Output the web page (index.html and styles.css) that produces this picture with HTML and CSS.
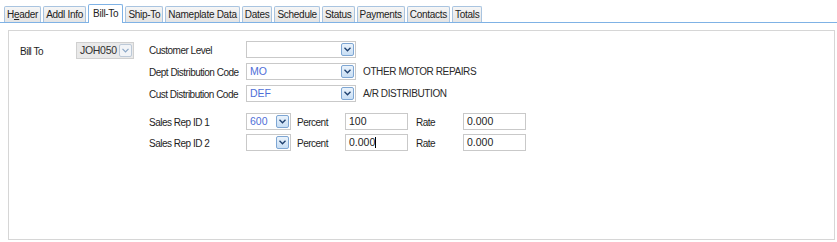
FILE: index.html
```html
<!DOCTYPE html>
<html lang="en">
<head>
    <meta charset="UTF-8">
    <title>Bill-To</title>
    <link rel="stylesheet" href="styles.css">
</head>
<body>

    <div class="tabs">
        <div class="tab">H<u>e</u>ader</div>
        <div class="tab">Addl Info</div>
        <div class="tab active">Bill-To</div>
        <div class="tab">Ship-To</div>
        <div class="tab">Nameplate Data</div>
        <div class="tab">Dates</div>
        <div class="tab">Schedule</div>
        <div class="tab">Status</div>
        <div class="tab">Payments</div>
        <div class="tab">Contacts</div>
        <div class="tab">Totals</div>
    </div>

    <div class="panel">
        <div class="billto">
            <span class="lbl">Bill To</span>
            <div class="combo disabled">
                <span class="val dark">JOH050</span>
                <span class="btn"><svg width="7" height="5" viewBox="0 0 7 5"><path d="M0.5 0.8 L3.5 3.8 L6.5 0.8" fill="none" stroke="#8aa6c6" stroke-width="1.2"/></svg></span>
            </div>
        </div>

        <div class="fields">
            <div class="row">
                <span class="lbl wide">Customer Level</span>
                <div class="combo long">
                    <span class="val"></span>
                    <span class="btn"><svg width="7" height="5" viewBox="0 0 7 5"><path d="M0.5 0.8 L3.5 3.8 L6.5 0.8" fill="none" stroke="#1d3f6e" stroke-width="1.3"/></svg></span>
                </div>
            </div>
            <div class="row">
                <span class="lbl wide">Dept Distribution Code</span>
                <div class="combo long">
                    <span class="val">MO</span>
                    <span class="btn"><svg width="7" height="5" viewBox="0 0 7 5"><path d="M0.5 0.8 L3.5 3.8 L6.5 0.8" fill="none" stroke="#1d3f6e" stroke-width="1.3"/></svg></span>
                </div>
                <span class="desc">OTHER MOTOR REPAIRS</span>
            </div>
            <div class="row">
                <span class="lbl wide">Cust Distribution Code</span>
                <div class="combo long">
                    <span class="val">DEF</span>
                    <span class="btn"><svg width="7" height="5" viewBox="0 0 7 5"><path d="M0.5 0.8 L3.5 3.8 L6.5 0.8" fill="none" stroke="#1d3f6e" stroke-width="1.3"/></svg></span>
                </div>
                <span class="desc">A/R DISTRIBUTION</span>
            </div>

            <div class="row rep first">
                <span class="lbl wide">Sales Rep ID 1</span>
                <div class="combo short">
                    <span class="val">600</span>
                    <span class="btn"><svg width="7" height="5" viewBox="0 0 7 5"><path d="M0.5 0.8 L3.5 3.8 L6.5 0.8" fill="none" stroke="#1d3f6e" stroke-width="1.3"/></svg></span>
                </div>
                <span class="lbl pct">Percent</span>
                <div class="box">100</div>
                <span class="lbl rate">Rate</span>
                <div class="box">0.000</div>
            </div>
            <div class="row rep">
                <span class="lbl wide">Sales Rep ID 2</span>
                <div class="combo short">
                    <span class="val"></span>
                    <span class="btn"><svg width="7" height="5" viewBox="0 0 7 5"><path d="M0.5 0.8 L3.5 3.8 L6.5 0.8" fill="none" stroke="#1d3f6e" stroke-width="1.3"/></svg></span>
                </div>
                <span class="lbl pct">Percent</span>
                <div class="box">0.000<span class="caret"></span></div>
                <span class="lbl rate">Rate</span>
                <div class="box">0.000</div>
            </div>
        </div>
    </div>

</body>
</html>
```

FILE: styles.css
```css
/* General Styling */
body {
    margin: 0;
    background: white;
    font-family: "Liberation Sans", Arial, sans-serif;
    font-size: 10px;
    color: #1e1e1e;
    width: 837px;
    height: 242px;
    overflow: hidden;
}

/* Tabs */
.tabs {
    display: flex;
    align-items: flex-end;
    height: 22px;
    padding-left: 4px;
    border-bottom: 1px solid #7fb2e5;
}

.tab {
    height: 15px;
    line-height: 15px;
    padding: 0 2px;
    margin-right: 2px;
    border: 1px solid #a9c4e0;
    border-bottom: none;
    border-radius: 2px 2px 0 0;
    background: linear-gradient(#f6f6f6, #e4e4e4);
    color: #222;
    letter-spacing: -0.28px;
}

.tab.active {
    height: 18px;
    line-height: 17px;
    padding: 0 4px;
    margin-bottom: -1px;
    background: white;
    border-color: #7fb2e5;
    position: relative;
}

/* Panel */
.panel {
    display: flex;
    margin: 7px 2px 0 8px;
    height: 198px;
    border: 1px solid #d6d6d6;
    padding-top: 10px;
    padding-left: 11px;
}

.lbl {
    line-height: 17px;
    white-space: nowrap;
    letter-spacing: -0.5px;
    padding-top: 1px;
}

.billto {
    display: flex;
    width: 129px;
    height: 17px;
    margin-top: 1px;
}

.billto .lbl {
    width: 56px;
}

.fields {
    display: flex;
    flex-direction: column;
    gap: 5px;
}

.row {
    display: flex;
    align-items: center;
    height: 17px;
}

.row.first {
    margin-top: 6px;
}

.row.rep {
    margin-bottom: -1px;
}

.lbl.wide {
    width: 97px;
}

.lbl.pct {
    width: 48px;
    margin-left: 6px;
}

.lbl.rate {
    width: 47px;
    margin-left: 8px;
}

/* Combos */
.combo {
    display: flex;
    align-items: center;
    height: 15px;
    border: 1px solid #c9c9c9;
    background: white;
}

.combo.disabled {
    width: 56px;
    background: #e9e9e9;
    border-color: #d0d0d0;
}

.combo.long {
    width: 108px;
}

.combo.short {
    width: 43px;
}

.val {
    flex: 1;
    padding-left: 3px;
    color: #4f6fd8;
    line-height: 15px;
    font-size: 10.5px;
}

.val.dark {
    color: #303030;
    letter-spacing: -0.3px;
}

.btn {
    display: flex;
    align-items: center;
    justify-content: center;
    width: 11px;
    height: 11px;
    margin-right: 1px;
    border: 1px solid #7ea6d3;
    border-radius: 2px;
    background: linear-gradient(#eaf3fc, #c8def4);
}

.disabled .btn {
    border-color: #bcc9d8;
    background: #f2f4f7;
}

.desc {
    margin-left: 7px;
    font-size: 10px;
    letter-spacing: -0.4px;
    color: #2a2a2a;
}

.box {
    width: 58px;
    height: 15px;
    line-height: 15px;
    padding-left: 3px;
    border: 1px solid #c9c9c9;
    font-size: 10.5px;
    color: #1e1e1e;
}

.caret {
    display: inline-block;
    width: 1px;
    height: 11px;
    background: #000;
    vertical-align: -2px;
}
```
